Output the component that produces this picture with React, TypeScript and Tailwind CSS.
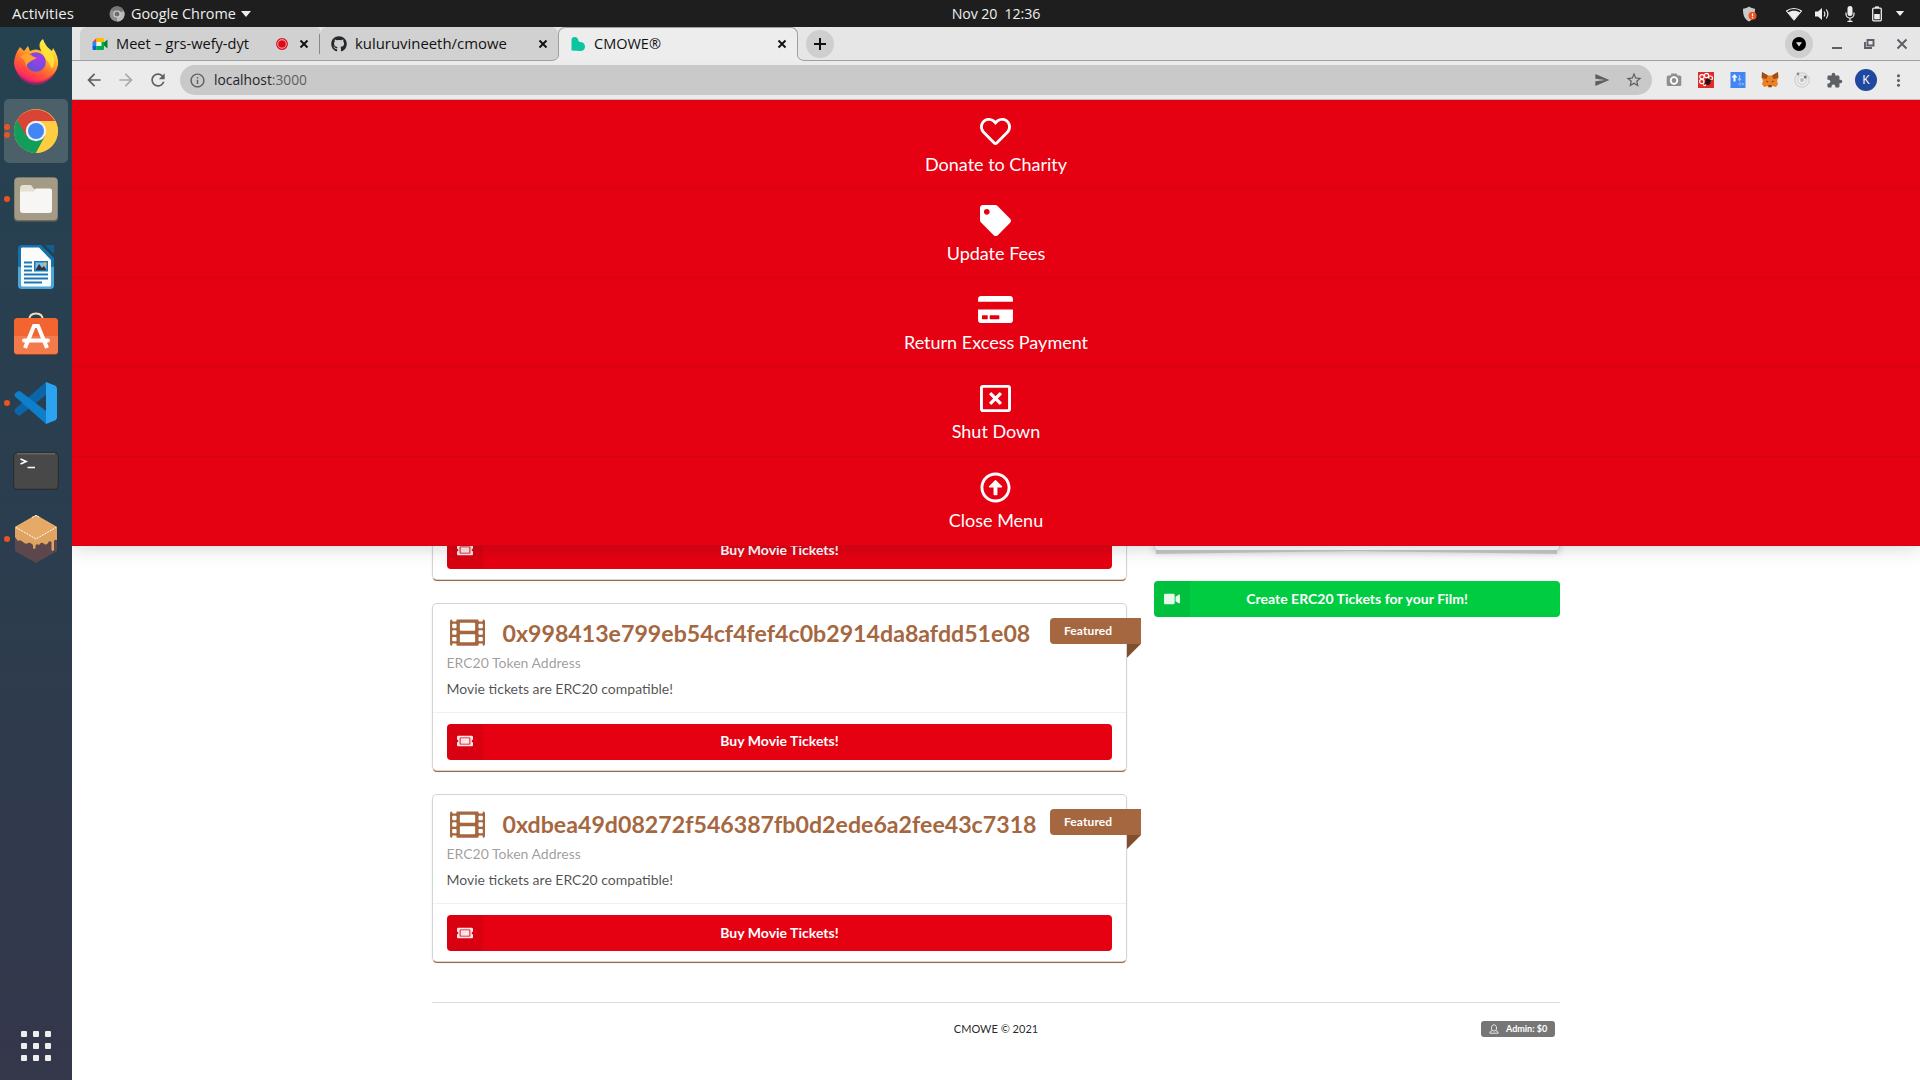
import type { ReactNode } from 'react';
import {
  FaFilm,
  FaGithub,
  FaRegArrowAltCircleUp,
  FaRegHeart,
  FaRegWindowClose,
  FaTag,
  FaTicketAlt,
  FaVideo,
} from 'react-icons/fa';
import {
  MdArrowBack,
  MdArrowForward,
  MdExtension,
  MdInfoOutline,
  MdMoreVert,
  MdRefresh,
  MdSend,
  MdStarBorder,
} from 'react-icons/md';

/* ---------- Desktop top bar ---------- */

function ChromeGreyIcon() {
  return (
    <svg viewBox="0 0 16 16" className="size-4">
      <circle cx="8" cy="8" r="7.5" fill="#8d8d8d" />
      <path d="M8 8 L15 5 A7.5 7.5 0 0 1 8 15.5 Z" fill="#b9b9b9" />
      <path d="M1.6 4 A7.5 7.5 0 0 1 15 5 L8 5 Z" fill="#777" />
      <circle cx="8" cy="8" r="3.6" fill="#d8d8d8" />
      <circle cx="8" cy="8" r="2.5" fill="#6f6f6f" />
    </svg>
  );
}

function TopBar() {
  return (
    <header className="relative flex h-[27px] items-center bg-[#1e1e1e] text-[#eeeeec]">
      <span className="ml-3 w-[97px] text-[15px] whitespace-nowrap">Activities</span>
      <ChromeGreyIcon />
      <span className="ml-[6px] text-[14.4px] whitespace-nowrap">Google Chrome</span>
      <svg viewBox="0 0 10 6" className="ml-[5px] h-[6px] w-[10px]">
        <path d="M0 0H10L5 6Z" fill="#eeeeec" />
      </svg>
      <div className="absolute inset-x-0 flex justify-center pl-[72px]">
        <span className="text-[14.2px] tracking-[-0.1px] whitespace-pre">Nov 20  12:36</span>
      </div>
      <div className="ml-auto flex items-center pr-[15px]">
        <svg viewBox="0 0 16 16" className="mr-[28px] size-4">
          <path d="M7 .5C5 2 3 2.6 1 2.7C1 9 2 12.5 7 15.5C12 12.5 13 9 13 2.7C11 2.6 9 2 7 .5Z" fill="#c9c9c9" />
          <circle cx="10.5" cy="9.7" r="4" fill="#e95420" />
          <path d="M10.5 7.5V10.200M10.5 11.1V12.2" stroke="#fff" strokeWidth="1.2" />
        </svg>
        <svg viewBox="0 0 16 14" className="mr-3 h-[14px] w-4">
          <path d="M.5 4C5 .6 11 .6 15.5 4L8 13Z" fill="none" stroke="#eeeeec" strokeWidth="1.1" />
          <path d="M2 5.600C5.5 3.200 10.5 3.200 14 5.600L8 13Z" fill="#eeeeec" />
        </svg>
        <svg viewBox="0 0 16 14" className="mr-3 h-[14px] w-4">
          <path d="M1 4.500H4L8 1V13L4 9.500H1Z" fill="#eeeeec" />
          <path d="M10 4.500Q11.700 7 10 9.500M12.200 2.500Q15.500 7 12.200 11.500" fill="none" stroke="#eeeeec" strokeWidth="1.2" />
        </svg>
        <svg viewBox="0 0 16 16" className="mr-[13px] size-4">
          <rect x="5.5" y="0" width="5" height="10" rx="2.5" fill="#eeeeec" />
          <path d="M4 6.500V8A4 4 0 0 0 12 8V6.500M8 12.500V15M5.500 15.300H10.500" fill="none" stroke="#eeeeec" strokeWidth="1.2" />
        </svg>
        <svg viewBox="0 0 12 16" className="mr-[12px] h-4 w-3">
          <path d="M4 1.200H8" stroke="#eeeeec" strokeWidth="1.6" />
          <rect x="1.7" y="2.2" width="8.6" height="12.6" rx="1" fill="none" stroke="#eeeeec" strokeWidth="1.3" />
          <rect x="3.2" y="8" width="5.6" height="5.3" fill="#eeeeec" />
        </svg>
        <svg viewBox="0 0 10 6" className="h-[5px] w-[10px]">
          <path d="M0 0H10L5 6Z" fill="#eeeeec" />
        </svg>
      </div>
    </header>
  );
}

/* ---------- Dock ---------- */

function FirefoxIcon() {
  return (
    <svg viewBox="0 0 46 47" className="mb-[3px] h-[47px] w-[46px]">
      <defs>
        <linearGradient id="ffBody" x1=".8" y1=".1" x2=".3" y2="1">
          <stop offset="0" stopColor="#fff44f" />
          <stop offset=".3" stopColor="#ffb82e" />
          <stop offset=".6" stopColor="#ff6a2d" />
          <stop offset=".85" stopColor="#ff3750" />
          <stop offset="1" stopColor="#e31587" />
        </linearGradient>
        <radialGradient id="ffGlobe" cx=".65" cy=".3" r=".8">
          <stop offset="0" stopColor="#a63bea" />
          <stop offset="1" stopColor="#5b54d6" />
        </radialGradient>
      </defs>
      <path d="M7 9L11 13L15 8L17 13Q23 10 28 13Q24 5 30 1Q32 8 39 13L40 10Q46 19 45 27A22.3 21.5 0 0 1 1 26Q1 17 7 9Z" fill="url(#ffBody)" />
      <path d="M29 2Q32 9 38 14Q44 23 39 31Q36 24 32 20Q26 12 29 2Z" fill="#ffe636" opacity=".85" />
      <circle cx="23" cy="24" r="9.800" fill="url(#ffGlobe)" />
      <path d="M7 19Q12 14 18 17Q20 19 24 20Q20 22 18 23Q14 25 13 29Q13 22 7 19Z" fill="#ffa22e" />
      <path d="M3 33Q10 43 23 43Q36 42 43 33Q37 46 23 47Q8 46 3 33Z" fill="#e51a6c" opacity=".5" />
    </svg>
  );
}

function ChromeIcon() {
  return (
    <svg viewBox="0 0 44 44" className="size-[44px]">
      <circle cx="22" cy="22" r="22" fill="#ffcd41" />
      <path d="M22 22L3 11A22 22 0 0 0 22 44L31.5 27Z" fill="#129d5a" />
      <path d="M3 11A22 22 0 0 1 41 12H22L12.5 27Z" fill="#da4437" />
      <path d="M22 44A22 22 0 0 0 41.4 12H22L31 27Z" fill="#ffcd41" />
      <circle cx="22" cy="22" r="10.2" fill="#f1f1f1" />
      <circle cx="22" cy="22" r="8" fill="#4285f4" />
    </svg>
  );
}

function FilesIcon() {
  return (
    <svg viewBox="0 0 46 46" className="size-[46px]">
      <rect x="1" y="1.5" width="44" height="44" rx="4" fill="#6f6a5c" />
      <rect x="1.5" y="1.5" width="43" height="42.5" rx="4" fill="#a39b86" />
      <path d="M7 13Q7 9 10 9H18L21 13H33V20H7Z" fill="#e4e0d2" />
      <path d="M7 15.500H21L23 12.500H37Q39 12.500 39 14.500V34Q39 37 36 37H10Q7 37 7 34Z" fill="#f7f6f4" />
    </svg>
  );
}

function WriterIcon() {
  return (
    <svg viewBox="0 0 38 46" className="h-[46px] w-[38px]">
      <path d="M5 1H24L37 14V41Q37 45 33 45H5Q1 45 1 41V5Q1 1 5 1Z" fill="#1372ae" />
      <path d="M1 23H37V41Q37 45 33 45H5Q1 45 1 41Z" fill="#4aa9d9" />
      <path d="M5 3.500H22L34 16V41Q34 42.500 32.500 42.500H5.500Q4 42.500 4 41V5Q4 3.500 5 3.500Z" fill="#fbfbfb" />
      <path d="M28 1H37V10Z" fill="#0f5f95" />
      <path d="M7 18.500H15M7 22.500H15M7 26.500H15M7 30.500H31M7 34.500H31M7 38.500H25" stroke="#1b7ab5" strokeWidth="1.9" />
      <rect x="17" y="17" width="14" height="10.5" fill="#1b7ab5" />
      <rect x="18.5" y="18.5" width="11" height="7.5" fill="#7cc0ea" />
      <path d="M18.500 26L22 20L25 24L27 22L29.500 26Z" fill="#333" />
      <circle cx="28" cy="19.8" r="1.5" fill="#f7b52c" />
    </svg>
  );
}

function SoftwareIcon() {
  return (
    <svg viewBox="0 0 46 46" className="mb-[3px] size-[46px]">
      <path d="M16 10Q16 2.500 23 2.500Q30 2.500 30 10" fill="none" stroke="#f2dcb8" strokeWidth="1.8" />
      <rect x="1" y="7.5" width="44" height="36.5" rx="3.5" fill="#a33f19" />
      <rect x="1" y="7" width="44" height="36" rx="3.5" fill="#f26430" />
      <path d="M1 25H45V39.500Q45 43 41.500 43H4.500Q1 43 1 39.500Z" fill="#f47a4c" />
      <path d="M12 37L21 15H25L34 37" fill="none" stroke="#fff" strokeWidth="4" />
      <path d="M11 29.500H35" stroke="#fff" strokeWidth="4" strokeLinecap="round" />
    </svg>
  );
}

function VsCodeIcon() {
  return (
    <svg viewBox="0 0 44 44" className="size-[44px]">
      <path d="M1 28L32 1V14L6 34.500Q4.500 35 3 33.500L1 31.500Q0 29.500 1 28Z" fill="#0a66a9" />
      <path d="M1 15.500Q0 14 1 12.500L3.500 10.500Q5 9.500 6.500 10.500L32 30V43Z" fill="#0f7fcb" />
      <path d="M32 1L41 4.500Q43 5.500 43 7.500V36.500Q43 38.500 41 39.500L32 43Z" fill="#2ba3f0" />
    </svg>
  );
}

function TerminalIcon() {
  return (
    <svg viewBox="0 0 46 38" className="h-[38px] w-[46px]">
      <rect x=".7" y=".7" width="44.6" height="36.6" rx="4" fill="#484848" stroke="#2b2b2b" />
      <path d="M4 1.800H42" stroke="#777" />
      <path d="M7.500 7L13 9.500L7.500 12" fill="none" stroke="#fff" strokeWidth="1.7" />
      <path d="M14.500 15.500H22" stroke="#fff" strokeWidth="1.5" />
    </svg>
  );
}

function CakeIcon() {
  return (
    <svg viewBox="0 0 42 48" className="h-[48px] w-[42px]">
      <path d="M21 0L42 12V36L21 48L0 36V12Z" fill="#5b474c" />
      <path d="M21 0L42 12V25Q40 24 39 26V35Q37.500 37 36.500 35V27Q34 25 33 28Q31 31 28 28Q26 27 24 30Q21 28 20.500 31V33Q19 35 18 33V30Q15 27 13 28Q11 30 8 27Q5 24 3 26L0 22V12Z" fill="#e0a462" />
      <path d="M21 0L42 12L21 24L0 12Z" fill="#e6aa67" />
      <path d="M1 12.500L21 24L41 12.500M17 2.500L21 .5L25 2.500" fill="none" stroke="#fff" strokeWidth="1" strokeDasharray="2 1" />
    </svg>
  );
}

const dockItems: { icon: ReactNode; dots: number; active?: boolean }[] = [
  { icon: <FirefoxIcon />, dots: 0 },
  { icon: <ChromeIcon />, dots: 2, active: true },
  { icon: <FilesIcon />, dots: 1 },
  { icon: <WriterIcon />, dots: 0 },
  { icon: <SoftwareIcon />, dots: 0 },
  { icon: <VsCodeIcon />, dots: 1 },
  { icon: <TerminalIcon />, dots: 0 },
  { icon: <CakeIcon />, dots: 1 },
];

function Dock() {
  return (
    <aside className="flex w-[72px] shrink-0 flex-col items-center bg-linear-to-b from-[#254251] via-[#2b3d4e] to-[#35374b] pt-[2px] pb-[19px]">
      {dockItems.map((item, i) => (
        <div key={i} className="flex h-[68px] w-full items-center justify-center">
          <div
            className={
              item.active
                ? 'relative flex size-16 items-center justify-center rounded-[5px] bg-[#4b6069]'
                : 'relative flex size-16 items-center justify-center'
            }
          >
            {item.icon}
            <div className="absolute top-0 left-0 flex h-full flex-col justify-center gap-[2px]">
              {Array.from({ length: item.dots }, (_, d) => (
                <span key={d} className="size-[6px] rounded-full bg-[#e95420]" />
              ))}
            </div>
          </div>
        </div>
      ))}
      <div className="mt-auto grid grid-cols-3 gap-[6px]">
        {Array.from({ length: 9 }, (_, i) => (
          <span key={i} className="size-[6px] rounded-[1px] bg-[#eeeeec]" />
        ))}
      </div>
    </aside>
  );
}

/* ---------- Browser chrome ---------- */

function CloseGlyph() {
  return (
    <svg viewBox="0 0 16 16" className="size-4">
      <path d="M4.500 4.500L11.500 11.500M11.500 4.500L4.500 11.500" stroke="#111" strokeWidth="1.9" />
    </svg>
  );
}

function TabStrip() {
  return (
    <div className="flex h-[34px] items-end border-b border-[#9f9f9f] bg-[#e6e6e6] pl-2 text-[#111]">
      <div className="flex h-[33px] w-[240px] items-center rounded-tl-[7px] rounded-tr-[4px] bg-[#d1d1d1] pr-[8px] pl-3">
        <svg viewBox="0 0 16 16" className="size-4">
          <path d="M.5 6L4.500 2V6Z" fill="#ea4335" />
          <path d="M4.500 2H11Q12 2 12 3V6H4.500Z" fill="#fbbc04" />
          <path d="M.5 6H4.500V10H.5Z" fill="#2684fc" />
          <path d="M.5 10H4.500V14H1.500Q.5 14 .5 13Z" fill="#0066da" />
          <path d="M4.500 10H9V6H12V13Q12 14 11 14H4.500Z" fill="#00ac47" />
          <path d="M12 6.500L15.500 3.500V12.500L12 9.500Z" fill="#00832d" />
          <rect x="4.5" y="6" width="5" height="4" fill="#e8f3ea" />
        </svg>
        <span className="ml-2 text-[14.6px] whitespace-nowrap">Meet – grs-wefy-dyt</span>
        <svg viewBox="0 0 12 12" className="ml-auto size-3">
          <circle cx="6" cy="6" r="5.3" fill="none" stroke="#e30613" strokeWidth="1.2" />
          <circle cx="6" cy="6" r="3.8" fill="#e30613" />
        </svg>
        <span className="ml-2">
          <CloseGlyph />
        </span>
      </div>
      <div className="flex h-[33px] w-[238px] items-center rounded-t-[7px] bg-[#d1d1d1]">
        <span className="-ml-px h-5 w-px bg-[#888]" />
        <FaGithub className="ml-[11px] size-4 text-[#24292e]" />
        <span className="ml-2 text-[14.9px] whitespace-nowrap">kuluruvineeth/cmowe</span>
        <span className="mr-[7px] ml-auto">
          <CloseGlyph />
        </span>
      </div>
      <div className="relative -mb-px flex h-[34px] w-[240px] items-center rounded-t-[7px] border border-b-0 border-[#9f9f9f] bg-[#ededed] pb-px">
        <svg viewBox="0 0 16 16" className="ml-[11px] size-4">
          <path d="M1.500 14.500V4Q1.500 1 4.500 1Q8 1 8.500 5Q9 6 10.500 6Q15 6.500 15 11Q14.500 15 10.500 15Z" fill="#0bc5a0" />
        </svg>
        <span className="ml-[8px] text-[14.5px] whitespace-nowrap">CMOWE®</span>
        <span className="mr-[7px] ml-auto">
          <CloseGlyph />
        </span>
        <svg viewBox="0 0 8 8" className="absolute right-[-8px] bottom-0 size-2">
          <path d="M0 0Q.5 7.500 8 7.500V8H0Z" fill="#ededed" />
          <path d="M0 0Q0 7.500 8 7.500" fill="none" stroke="#9f9f9f" />
        </svg>
        <svg viewBox="0 0 8 8" className="absolute bottom-0 left-[-8px] size-2">
          <path d="M8 0Q7.500 7.500 0 7.500V8H8Z" fill="#ededed" />
          <path d="M8 0Q8 7.500 0 7.500" fill="none" stroke="#9f9f9f" />
        </svg>
      </div>
      <div className="mb-[2px] ml-2 flex size-7 items-center justify-center rounded-full bg-[#cfcfcf]">
        <svg viewBox="0 0 14 14" className="size-[14px]">
          <path d="M7 1V13M1 7H13" stroke="#111" strokeWidth="2" />
        </svg>
      </div>
      <div className="ml-auto flex h-[33px] items-center pr-[10px]">
        <div className="mr-[16px] flex size-7 items-center justify-center rounded-full bg-[#cfcfcf]">
          <svg viewBox="0 0 14 14" className="size-[14px]">
            <circle cx="7" cy="7" r="7" fill="#000" />
            <path d="M4 5.300H10L7 9.500Z" fill="#e0e0e0" />
          </svg>
        </div>
        <svg viewBox="0 0 16 16" className="mr-4 size-4">
          <path d="M3 12H13" stroke="#5c5f66" strokeWidth="2" />
        </svg>
        <svg viewBox="0 0 16 16" className="mr-[17px] size-4">
          <path d="M6.500 4H12.500V9.500H6.500ZM4 6V12H11" fill="none" stroke="#5c5f66" strokeWidth="1.9" />
        </svg>
        <svg viewBox="0 0 16 16" className="size-4">
          <path d="M3.500 3.500L12.500 12.500M12.500 3.500L3.500 12.500" stroke="#5c5f66" strokeWidth="2" />
        </svg>
      </div>
    </div>
  );
}

function ToolCell({ children }: { children: ReactNode }) {
  return <span className="flex w-8 shrink-0 items-center justify-center text-[#5c5f66]">{children}</span>;
}

function Toolbar() {
  return (
    <div className="flex h-[39px] items-center border-b border-[#bdbdbd] bg-[#ebebeb] pr-[6px] pl-[6px]">
      <ToolCell>
        <MdArrowBack className="size-5" />
      </ToolCell>
      <ToolCell>
        <MdArrowForward className="size-5 text-[#aaaaaa]" />
      </ToolCell>
      <ToolCell>
        <MdRefresh className="size-5" />
      </ToolCell>
      <div className="mx-[6px] flex h-[30px] flex-1 items-center rounded-full bg-[#c9c9c9] pr-[2px] pl-[9px]">
        <MdInfoOutline className="size-[17px] text-[#5c5f66]" />
        <span className="ml-2 text-[13.8px] text-[#1f1f2a]">
          localhost<span className="text-[#5f6065]">:3000</span>
        </span>
        <span className="ml-auto flex">
          <ToolCell>
            <MdSend className="size-4" />
          </ToolCell>
          <ToolCell>
            <MdStarBorder className="size-[18px]" />
          </ToolCell>
        </span>
      </div>
      <ToolCell>
        <svg viewBox="0 0 16 16" className="size-4">
          <path d="M2 3.500H4.500L5.500 1.500H10.500L11.500 3.500H14Q15.300 3.500 15.300 5V12.500Q15.300 14 14 14H2Q.7 14 .7 12.500V5Q.7 3.500 2 3.500Z" fill="#8f8f8f" />
          <circle cx="8" cy="8.5" r="3.3" fill="none" stroke="#fff" strokeWidth="1.8" />
        </svg>
      </ToolCell>
      <ToolCell>
        <svg viewBox="0 0 16 16" className="size-4">
          <rect width="16" height="16" fill="#e02b2b" />
          <g fill="none" stroke="#fff" strokeWidth="1.2">
            <circle cx="4" cy="4.8" r="2.2" />
            <circle cx="8.5" cy="3.5" r="2.2" />
            <circle cx="12.5" cy="6" r="2" />
            <circle cx="3.8" cy="9.5" r="2.2" />
            <path d="M5 12.500Q7 15 8 12" />
          </g>
          <ellipse cx="9.8" cy="9.8" rx="2.6" ry="3.2" fill="#2a1210" />
          <path d="M7 12L13.500 8M12 12L8 7.500" stroke="#2a1210" strokeWidth="1.2" />
        </svg>
      </ToolCell>
      <ToolCell>
        <svg viewBox="0 0 16 16" className="size-4">
          <rect x=".5" width="15" height="16" fill="#4285f4" />
          <path d="M4.500 2L7.500 5.500H5.500V9.500H3.500V5.500H1.500Z" fill="#fff" />
          <path d="M9.500 3V8M8 6.500L9.500 8.500L11 6.500" fill="none" stroke="#a8c7fa" strokeWidth="1.2" />
          <path d="M9 11H11V13H9ZM12 11L14 13M14 11L12 13" fill="none" stroke="#8ab4f8" strokeWidth=".8" />
        </svg>
      </ToolCell>
      <ToolCell>
        <svg viewBox="0 0 18 16" className="h-4 w-[18px]">
          <path d="M1 0L7 3.500H11L17 0L17.500 5L16 9L17 12L15 15L11.500 14L10.500 15.500H7.500L6.500 14L3 15L1 12L2 9L.5 5Z" fill="#f0801f" />
          <path d="M1 0L7 3.500L5.500 7L.8 6ZM17 0L11 3.500L12.500 7L17.200 6Z" fill="#9a4f1e" />
          <path d="M5 8.500L7.500 9.800L6 10.300ZM13 8.500L10.500 9.800L12 10.300Z" fill="#233447" />
          <path d="M7.500 13H10.500V15H7.500Z" fill="#55504b" />
        </svg>
      </ToolCell>
      <ToolCell>
        <svg viewBox="0 0 16 16" className="size-4">
          <circle cx="8" cy="8" r="7.2" fill="none" stroke="#c8c8c8" />
          <circle cx="8" cy="8" r="4.5" fill="none" stroke="#d0d0d0" />
          <circle cx="8" cy="8" r="1.9" fill="#bdbdbd" />
          <circle cx="4" cy="2" r="1.4" fill="#8a8a8a" />
          <circle cx="11.3" cy="5" r="1.5" fill="#777" />
        </svg>
      </ToolCell>
      <ToolCell>
        <MdExtension className="size-[17px]" />
      </ToolCell>
      <ToolCell>
        <span className="flex size-[22px] items-center justify-center rounded-full bg-[#20489e] text-[12px] text-white">K</span>
      </ToolCell>
      <ToolCell>
        <MdMoreVert className="size-[19px]" />
      </ToolCell>
    </div>
  );
}

/* ---------- Page ---------- */

function CreditCardIcon() {
  return (
    <svg viewBox="0 0 576 512" className="h-[31px] w-[35px]" fill="currentColor">
      <path d="M0 432c0 26.500 21.500 48 48 48h480c26.500 0 48-21.500 48-48V256H0v176zm192-68c0-6.600 5.400-12 12-12h136c6.600 0 12 5.400 12 12v40c0 6.600-5.400 12-12 12H204c-6.600 0-12-5.400-12-12v-40zm-128 0c0-6.600 5.400-12 12-12h72c6.600 0 12 5.400 12 12v40c0 6.600-5.400 12-12 12H76c-6.600 0-12-5.400-12-12v-40zM576 80v48H0V80c0-26.500 21.500-48 48-48h480c26.500 0 48 21.500 48 48z" />
    </svg>
  );
}

const menuItems: { label: string; icon: ReactNode }[] = [
  { label: 'Donate to Charity', icon: <FaRegHeart className="size-[31px]" /> },
  { label: 'Update Fees', icon: <FaTag className="size-[31px]" /> },
  { label: 'Return Excess Payment', icon: <CreditCardIcon /> },
  { label: 'Shut Down', icon: <FaRegWindowClose className="size-[31px]" /> },
  { label: 'Close Menu', icon: <FaRegArrowAltCircleUp className="size-[31px]" /> },
];

function OverlayMenu() {
  return (
    <nav className="absolute inset-x-0 top-0 z-10 flex h-[446px] flex-col bg-[#e50012] text-white shadow-[0_0_20px_rgba(34,36,38,0.22)]">
      {menuItems.map((item) => (
        <a
          key={item.label}
          className="flex h-[89.13px] flex-col items-center border-b border-[#d20315] pt-[15.6px] last:h-auto last:flex-1"
        >
          <span className="pr-px">{item.icon}</span>
          <span className="mt-[4.4px] text-[18px] leading-[27px]">{item.label}</span>
        </a>
      ))}
    </nav>
  );
}

function LabeledButton({ icon, label, tone }: { icon: ReactNode; label: string; tone: 'red' | 'green' }) {
  return (
    <button
      className={
        tone === 'red'
          ? 'relative flex h-9 w-full items-center justify-center overflow-hidden rounded-[4px] bg-[#e50012] text-[14px] font-bold text-white'
          : 'relative flex h-9 w-full items-center justify-center overflow-hidden rounded-[4px] bg-[#00cc42] text-[14px] font-bold text-white'
      }
    >
      <span className="absolute inset-y-0 left-0 flex w-9 items-center justify-center bg-black/5">
        <span className="pr-px pb-px opacity-90">{icon}</span>
      </span>
      <span className="pb-[2px] tracking-[0.02px]">{label}</span>
    </button>
  );
}

function MovieCard({ address }: { address?: string }) {
  return (
    <article className="relative flex h-[166px] flex-col justify-end rounded-[4px] bg-white shadow-[0_0_0_1px_#d4d4d5,0_2px_0_0_#a5673f,0_1px_3px_0_#d4d4d5]">
      {address && (
        <div className="flex h-[108px] flex-col px-[14px] pt-3">
          <div className="flex h-[34.2px] items-start text-[#a5673f]">
            <FaFilm className="-mt-[0.5px] ml-[3px] size-[35px] shrink-0" />
            <span className="ml-[17.5px] text-[23.14px] leading-[34px] font-bold tracking-[0.02px] whitespace-nowrap">
              {address}
            </span>
          </div>
          <span className="-ml-[0.5px] text-[14px] leading-[25px] text-black/40">ERC20 Token Address</span>
          <span className="-ml-[0.5px] text-[14px] leading-[27px] text-black/70">Movie tickets are ERC20 compatible!</span>
        </div>
      )}
      <div className="border-t border-[#f0f0f0] px-[14px] pt-[11px] pb-[10px]">
        <LabeledButton tone="red" icon={<FaTicketAlt className="size-4" />} label="Buy Movie Tickets!" />
      </div>
      {address && (
        <div className="absolute top-[14px] left-[617px] flex h-[26px] w-[91px] items-center rounded-l-[4px] bg-[#a5673f] pl-[14px] text-[12px] font-bold tracking-[0.1px] text-white">
          Featured
          <span className="absolute top-full right-0 size-[14px] bg-[#814f2d] [clip-path:polygon(0_0,100%_0,0_100%)]" />
        </div>
      )}
    </article>
  );
}

function Page() {
  return (
    <main className="relative flex-1 overflow-hidden bg-white font-['Lato',sans-serif]">
      <OverlayMenu />
      <div className="mx-auto w-[1128px] pt-[313px]">
        <div className="flex gap-7">
          <section className="flex h-[548px] w-[694px] flex-col gap-[25.2px] pl-px">
            <MovieCard />
            <MovieCard address="0x998413e799eb54cf4fef4c0b2914da8afdd51e08" />
            <MovieCard address="0xdbea49d08272f546387fb0d2ede6a2fee43c7318" />
          </section>
          <aside className="w-[406px]">
            <div className="relative h-[138px] rounded-[4px] border border-[#d9d9da] bg-white shadow-[0_2px_6px_rgba(34,36,38,0.2)]">
              <span className="absolute top-full right-[2px] left-[1px] h-1 bg-[#c6c6c7] [clip-path:polygon(0_0,100%_0,100%_100%,50%_25%,0_100%)]" />
            </div>
            <div className="mt-[30px]">
              <LabeledButton tone="green" icon={<FaVideo className="size-4" />} label="Create ERC20 Tickets for your Film!" />
            </div>
          </aside>
        </div>
        <footer className="relative mt-[41px] flex h-[54px] items-center justify-center border-t border-[#dcdcdc] text-[11px] text-black/87">
          CMOWE © 2021
          <span className="absolute top-[18px] right-[5px] flex h-4 w-[74px] items-center rounded-[3px] bg-[#767676] pl-2 text-[9px] font-bold text-white">
            <svg viewBox="0 0 10 10" className="size-[10px]" fill="none" stroke="#e8e8e8">
              <path d="M3.300 6.500C1.800 5 2.300 .8 5 .8C7.700 .8 8.200 5 6.700 6.500Q5 7.600 3.300 6.500ZM3.300 6.500Q.8 7 .8 9.200H9.200Q9.200 7 6.700 6.500" />
            </svg>
            <span className="ml-[7px] whitespace-nowrap">Admin: $0</span>
          </span>
        </footer>
      </div>
    </main>
  );
}

export default function App() {
  return (
    <div className="flex h-[1080px] w-[1920px] flex-col overflow-hidden font-['Open_Sans',sans-serif]">
      <TopBar />
      <div className="flex min-h-0 flex-1">
        <Dock />
        <div className="flex min-w-0 flex-1 flex-col">
          <TabStrip />
          <Toolbar />
          <Page />
        </div>
      </div>
    </div>
  );
}
